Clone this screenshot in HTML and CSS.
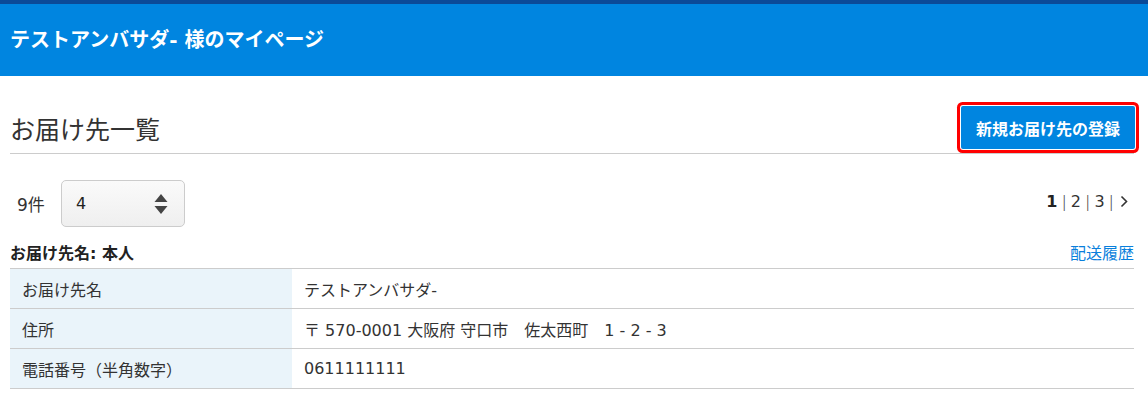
FILE: index.html
```html
<!DOCTYPE html>
<html>
  <head>
    <meta charset="utf-8">
    <title>お届け先一覧</title>
    <link rel="stylesheet" href="styles.css">
  </head>
  <body>
    <header class="site-header">
      <h1>テストアンバサダ- 様のマイページ</h1>
    </header>
    <main class="content">
      <div class="page-head">
        <h2>お届け先一覧</h2>
        <button type="button" class="btn-new">新規お届け先の登録</button>
      </div>

      <div class="toolbar">
        <div class="count">
          <span class="count_label">9件</span>
          <div class="per-page">
            <span>4</span>
            <svg width="14" height="24" viewBox="0 0 14 24">
              <path d="M7 2 L13.5 10 L0.5 10 Z" fill="#444"/>
              <path d="M0.5 14 L13.5 14 L7 22 Z" fill="#444"/>
            </svg>
          </div>
        </div>
        <div class="pager">
          <b>1</b><span class="sep">|</span><a>2</a><span class="sep">|</span><a>3</a><span class="sep">|</span><a class="next"><svg width="8" height="13" viewBox="0 0 8 13"><path d="M1.5 1.5 L6.5 6.5 L1.5 11.5" fill="none" stroke="#333" stroke-width="1.6"/></svg></a>
        </div>
      </div>

      <section class="address">
        <div class="address_head">
          <h3>お届け先名: 本人</h3>
          <a class="history">配送履歴</a>
        </div>
        <table class="address_table">
          <tr>
            <th>お届け先名</th>
            <td>テストアンバサダ-</td>
          </tr>
          <tr>
            <th>住所</th>
            <td>〒 570-0001 大阪府 守口市　佐太西町　1 - 2 - 3</td>
          </tr>
          <tr>
            <th>電話番号（半角数字）</th>
            <td>0611111111</td>
          </tr>
        </table>
      </section>
    </main>
  </body>
</html>
```

FILE: styles.css
```css
* {
  margin: 0;
  padding: 0;
  box-sizing: border-box;
}

body {
  font-family: "DejaVu Sans", "Noto Sans CJK JP", sans-serif;
  color: #333;
  background-color: white;
}

.site-header {
  background-color: #0085e0;
  border-top: 4px solid #0b4a98;
  height: 76px;
  display: flex;
  align-items: center;
  padding: 0 10px;
}

.site-header h1 {
  color: white;
  font-size: 20px;
  font-weight: bold;
  line-height: 1;
}

.content {
  padding: 0 14px 0 10px;
}

.page-head {
  display: flex;
  justify-content: space-between;
  align-items: center;
  margin-top: 30px;
  padding-bottom: 4px;
  border-bottom: 1px solid #ccc;
}

.page-head h2 {
  font-size: 25px;
  font-weight: normal;
  line-height: 1;
  margin-top: 6px;
}

.btn-new {
  font-family: inherit;
  background-color: #0085e0;
  color: white;
  border: none;
  border-radius: 2px;
  font-size: 16px;
  font-weight: bold;
  width: 174px;
  height: 43px;
  margin-right: -1px;
  box-shadow: 0 0 0 1px #fff, 0 0 0 4px #f00;
  cursor: pointer;
}

.toolbar {
  display: flex;
  justify-content: space-between;
  align-items: center;
  margin-top: 26px;
}

.count {
  display: flex;
  align-items: center;
}

.count_label {
  font-size: 17px;
  width: 51px;
  padding-left: 7px;
}

.per-page {
  width: 124px;
  height: 47px;
  border: 1px solid #ccc;
  border-radius: 5px;
  background: linear-gradient(#fafafa, #efefef);
  display: flex;
  align-items: center;
  justify-content: space-between;
  padding: 0 16px 0 14px;
  font-size: 16px;
  color: #222;
}

.pager {
  display: flex;
  align-items: center;
  font-size: 16px;
  color: #333;
  margin-right: 6px;
  margin-top: -4px;
}

.pager b {
  color: #222;
}

.pager .sep {
  padding: 0 4px;
  font-weight: 300;
}

.pager .next {
  display: flex;
  padding-left: 2px;
}

.address_head {
  display: flex;
  justify-content: space-between;
  align-items: flex-end;
  height: 41px;
  padding-bottom: 5px;
  line-height: 1.2;
}

.address_head h3 {
  font-size: 16px;
  font-weight: bold;
  color: #222;
}

.history {
  color: #0a7fdc;
  font-size: 16px;
}

.address_table {
  width: 100%;
  border-collapse: collapse;
  font-size: 16px;
}

.address_table th,
.address_table td {
  height: 40px;
  border-top: 1px solid #ccc;
  border-bottom: 1px solid #ccc;
  text-align: left;
  font-weight: normal;
  padding: 0 12px;
}

.address_table th {
  background-color: #eaf4fa;
  width: 282px;
}
```
